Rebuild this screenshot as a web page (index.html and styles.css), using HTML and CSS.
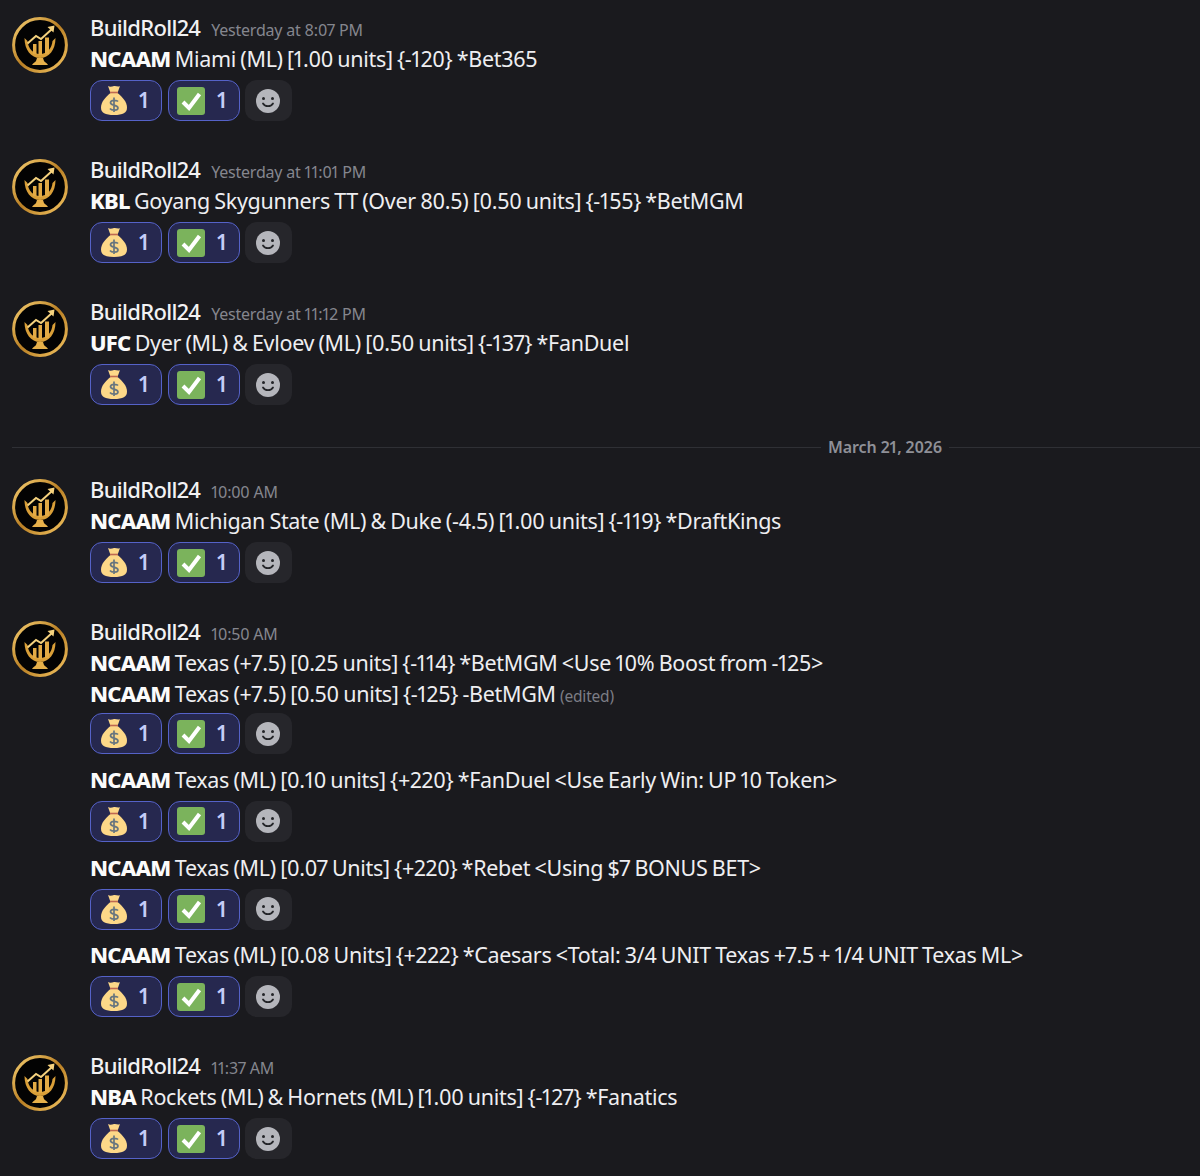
FILE: index.html
```html
<!DOCTYPE html>
<html lang="en">
<head>
    <meta charset="UTF-8">
    <meta name="viewport" content="width=device-width, initial-scale=1.0">
    <title>BuildRoll24 picks</title>
    <link rel="stylesheet" href="styles.css">
</head>
<body>
    <svg class="defs" width="0" height="0">
        <defs>
            <linearGradient id="gold" x1="0" y1="0" x2="1" y2="1">
                <stop offset="0" stop-color="#f6cf72"/>
                <stop offset="0.5" stop-color="#b97f24"/>
                <stop offset="1" stop-color="#f3c462"/>
            </linearGradient>
        </defs>
        <symbol id="avatar" viewBox="0 0 56 56">
            <circle cx="28" cy="28" r="26.4" fill="#030303" stroke="url(#gold)" stroke-width="3"/>
            <path d="M12.500 21C12.500 33 19 41 28 41S43.500 33 43.500 21L40.500 24C40 31 35 37 28 37S16 31 15.500 24z" fill="#d99f38"/>
            <path d="M21 37V27h3.500v10zM26.500 38V24h3.500v14zM33 37V20.500h4V37z" fill="#e3ab45"/>
            <path d="M15.500 26.500l8.500-7.500 5 3 11-10" fill="none" stroke="#f5d27e" stroke-width="2"/>
            <path d="M35.500 10l7-1.500-1 7z" fill="#f5d27e"/>
            <path d="M25 41h6l1 3c1 1.500 3 2 4 4H20c1-2 3-2.500 4-4z" fill="#e6b04a"/>
        </symbol>
        <symbol id="bag" viewBox="0 0 26 30">
            <path d="M7 1c2 1.500 4 .5 6 0s4 1.500 6 0l-2.500 7h-7z" fill="#fdd888"/>
            <path d="M9.500 8h7c5 4 9.500 9 9.500 14.500 0 5.500-4 7.500-13 7.500S0 28 0 22.500C0 17 4.500 12 9.500 8z" fill="#fdd888"/>
            <path d="M9 7.500h8" stroke="#bf6952" stroke-width="1.600"/>
            <path d="M17 16.500c-1-1.500-7.500-2-7.500 1.200 0 3.300 7.500 1.500 7.500 5.300 0 2.800-6.500 2.800-8 .5M13 12.500v14.500" fill="none" stroke="#67757f" stroke-width="1.700"/>
        </symbol>
        <symbol id="check" viewBox="0 0 28 28">
            <rect width="28" height="28" rx="3" fill="#7bb35c"/>
            <path d="M6 15l6 6L22.500 7" fill="none" stroke="#fff" stroke-width="4"/>
        </symbol>
        <symbol id="smile" viewBox="0 0 24 24">
            <circle cx="12" cy="12" r="12" fill="#b5b6bc"/>
            <circle cx="7.500" cy="9.500" r="1.500" fill="#232428"/>
            <circle cx="16.500" cy="9.500" r="1.500" fill="#232428"/>
            <path d="M7 14.500c2 3.500 8 3.500 10 0" fill="none" stroke="#232428" stroke-width="1.800" stroke-linecap="round"/>
        </symbol>
    </svg>

    <div class="message">
        <svg class="avatar"><use href="#avatar"/></svg>
        <div class="content">
            <div class="head"><span class="name">BuildRoll24</span><span class="time">Yesterday at 8:07 PM</span></div>
            <div class="line"><b>NCAAM</b> Miami (ML) [1.00 units] {-120} *Bet365</div>
            <div class="reactions">
                <span class="react"><svg class="bag"><use href="#bag"/></svg>1</span>
                <span class="react checked"><svg class="check"><use href="#check"/></svg>1</span>
                <span class="add"><svg class="smile"><use href="#smile"/></svg></span>
            </div>
        </div>
    </div>

    <div class="message">
        <svg class="avatar"><use href="#avatar"/></svg>
        <div class="content">
            <div class="head"><span class="name">BuildRoll24</span><span class="time">Yesterday at 11:01 PM</span></div>
            <div class="line"><b>KBL</b> Goyang Skygunners TT (Over 80.5) [0.50 units] {-155} *BetMGM</div>
            <div class="reactions">
                <span class="react"><svg class="bag"><use href="#bag"/></svg>1</span>
                <span class="react checked"><svg class="check"><use href="#check"/></svg>1</span>
                <span class="add"><svg class="smile"><use href="#smile"/></svg></span>
            </div>
        </div>
    </div>

    <div class="message">
        <svg class="avatar"><use href="#avatar"/></svg>
        <div class="content">
            <div class="head"><span class="name">BuildRoll24</span><span class="time">Yesterday at 11:12 PM</span></div>
            <div class="line"><b>UFC</b> Dyer (ML) &amp; Evloev (ML) [0.50 units] {-137} *FanDuel</div>
            <div class="reactions">
                <span class="react"><svg class="bag"><use href="#bag"/></svg>1</span>
                <span class="react checked"><svg class="check"><use href="#check"/></svg>1</span>
                <span class="add"><svg class="smile"><use href="#smile"/></svg></span>
            </div>
        </div>
    </div>

    <div class="divider"><span>March 21, 2026</span></div>

    <div class="message">
        <svg class="avatar"><use href="#avatar"/></svg>
        <div class="content">
            <div class="head"><span class="name">BuildRoll24</span><span class="time">10:00 AM</span></div>
            <div class="line"><b>NCAAM</b> Michigan State (ML) &amp; Duke (-4.5) [1.00 units] {-119} *DraftKings</div>
            <div class="reactions">
                <span class="react"><svg class="bag"><use href="#bag"/></svg>1</span>
                <span class="react checked"><svg class="check"><use href="#check"/></svg>1</span>
                <span class="add"><svg class="smile"><use href="#smile"/></svg></span>
            </div>
        </div>
    </div>

    <div class="message">
        <svg class="avatar"><use href="#avatar"/></svg>
        <div class="content">
            <div class="head"><span class="name">BuildRoll24</span><span class="time">10:50 AM</span></div>
            <div class="line"><b>NCAAM</b> Texas (+7.5) [0.25 units] {-114} *BetMGM &lt;Use 10% Boost from -125&gt;</div>
            <div class="line edited-line"><b>NCAAM</b> Texas (+7.5) [0.50 units] {-125} -BetMGM <span class="edited">(edited)</span></div>
            <div class="reactions">
                <span class="react"><svg class="bag"><use href="#bag"/></svg>1</span>
                <span class="react checked"><svg class="check"><use href="#check"/></svg>1</span>
                <span class="add"><svg class="smile"><use href="#smile"/></svg></span>
            </div>
            <div class="line followup"><b>NCAAM</b> Texas (ML) [0.10 units] {+220} *FanDuel &lt;Use Early Win: UP 10 Token&gt;</div>
            <div class="reactions">
                <span class="react"><svg class="bag"><use href="#bag"/></svg>1</span>
                <span class="react checked"><svg class="check"><use href="#check"/></svg>1</span>
                <span class="add"><svg class="smile"><use href="#smile"/></svg></span>
            </div>
            <div class="line followup"><b>NCAAM</b> Texas (ML) [0.07 Units] {+220} *Rebet &lt;Using $7 BONUS BET&gt;</div>
            <div class="reactions">
                <span class="react"><svg class="bag"><use href="#bag"/></svg>1</span>
                <span class="react checked"><svg class="check"><use href="#check"/></svg>1</span>
                <span class="add"><svg class="smile"><use href="#smile"/></svg></span>
            </div>
            <div class="line followup"><b>NCAAM</b> Texas (ML) [0.08 Units] {+222} *Caesars &lt;Total: 3/4 UNIT Texas +7.5 + 1/4 UNIT Texas ML&gt;</div>
            <div class="reactions">
                <span class="react"><svg class="bag"><use href="#bag"/></svg>1</span>
                <span class="react checked"><svg class="check"><use href="#check"/></svg>1</span>
                <span class="add"><svg class="smile"><use href="#smile"/></svg></span>
            </div>
        </div>
    </div>

    <div class="message">
        <svg class="avatar"><use href="#avatar"/></svg>
        <div class="content">
            <div class="head"><span class="name">BuildRoll24</span><span class="time">11:37 AM</span></div>
            <div class="line"><b>NBA</b> Rockets (ML) &amp; Hornets (ML) [1.00 units] {-127} *Fanatics</div>
            <div class="reactions">
                <span class="react"><svg class="bag"><use href="#bag"/></svg>1</span>
                <span class="react checked"><svg class="check"><use href="#check"/></svg>1</span>
                <span class="add"><svg class="smile"><use href="#smile"/></svg></span>
            </div>
        </div>
    </div>
</body>
</html>
```

FILE: styles.css
```css
body {
    margin: 0;
    padding-top: 12px;
    height: 1164px;
    overflow: hidden;
    background-color: #1a1a1e;
    color: #eeeef1;
    font-family: "Noto Sans", sans-serif;
    font-size: 21.5px;
    font-variant-numeric: proportional-nums;
    letter-spacing: -0.3px;
    word-spacing: -1px;
}
.defs {
    position: absolute;
}
.message {
    display: flex;
    gap: 22px;
    padding-left: 12px;
    margin-bottom: 33px;
}
.avatar {
    width: 56px;
    height: 56px;
    margin-top: 5px;
    flex-shrink: 0;
}
.content {
    flex: 1;
}
.head {
    display: flex;
    align-items: baseline;
    gap: 11px;
    height: 31px;
    line-height: 31px;
}
.name {
    font-size: 22px;
    font-weight: 500;
    letter-spacing: -0.7px;
    color: #f2f2f4;
}
.time {
    font-size: 16px;
    letter-spacing: -0.2px;
    word-spacing: 0;
    color: #85868e;
}
.line {
    line-height: 31px;
    white-space: nowrap;
}
.line b {
    font-size: 22px;
    font-weight: 800;
    letter-spacing: -0.8px;
    color: #fbfbfb;
}
.edited-line {
    margin-bottom: -2px;
}
.followup {
    margin-top: 9.8px;
}
.edited {
    font-size: 15.500px;
    line-height: 1;
    letter-spacing: -0.2px;
    color: #7c7d85;
}
.reactions {
    display: flex;
    gap: 6px;
    margin-top: 6px;
}
.react {
    box-sizing: border-box;
    width: 72px;
    height: 41px;
    display: flex;
    align-items: center;
    gap: 12px;
    padding-left: 10px;
    border: 1.5px solid #5562c8;
    border-radius: 12px;
    background-color: #26284f;
    color: #c5ccf8;
    font-size: 21px;
    font-weight: 600;
    line-height: 1;
}
.checked {
    padding-left: 8px;
}
.bag {
    width: 26px;
    height: 30px;
    margin-top: -1px;
}
.check {
    width: 28px;
    height: 28px;
}
.add {
    width: 47px;
    height: 41px;
    margin-left: -1px;
    padding-right: 1px;
    box-sizing: border-box;
    display: flex;
    align-items: center;
    justify-content: center;
    border-radius: 12px;
    background-color: #26262b;
}
.smile {
    width: 24px;
    height: 24px;
}
.divider {
    display: flex;
    align-items: center;
    gap: 7px;
    margin: 34px 0 19px 12px;
    height: 16px;
    color: #8f9097;
    font-size: 16px;
    font-weight: 600;
    letter-spacing: -0.1px;
    word-spacing: 0;
}
.divider::before,
.divider::after {
    content: "";
    height: 1px;
    background-color: #2f3035;
}
.divider::before {
    width: 809px;
}
.divider::after {
    flex: 1;
}
```
